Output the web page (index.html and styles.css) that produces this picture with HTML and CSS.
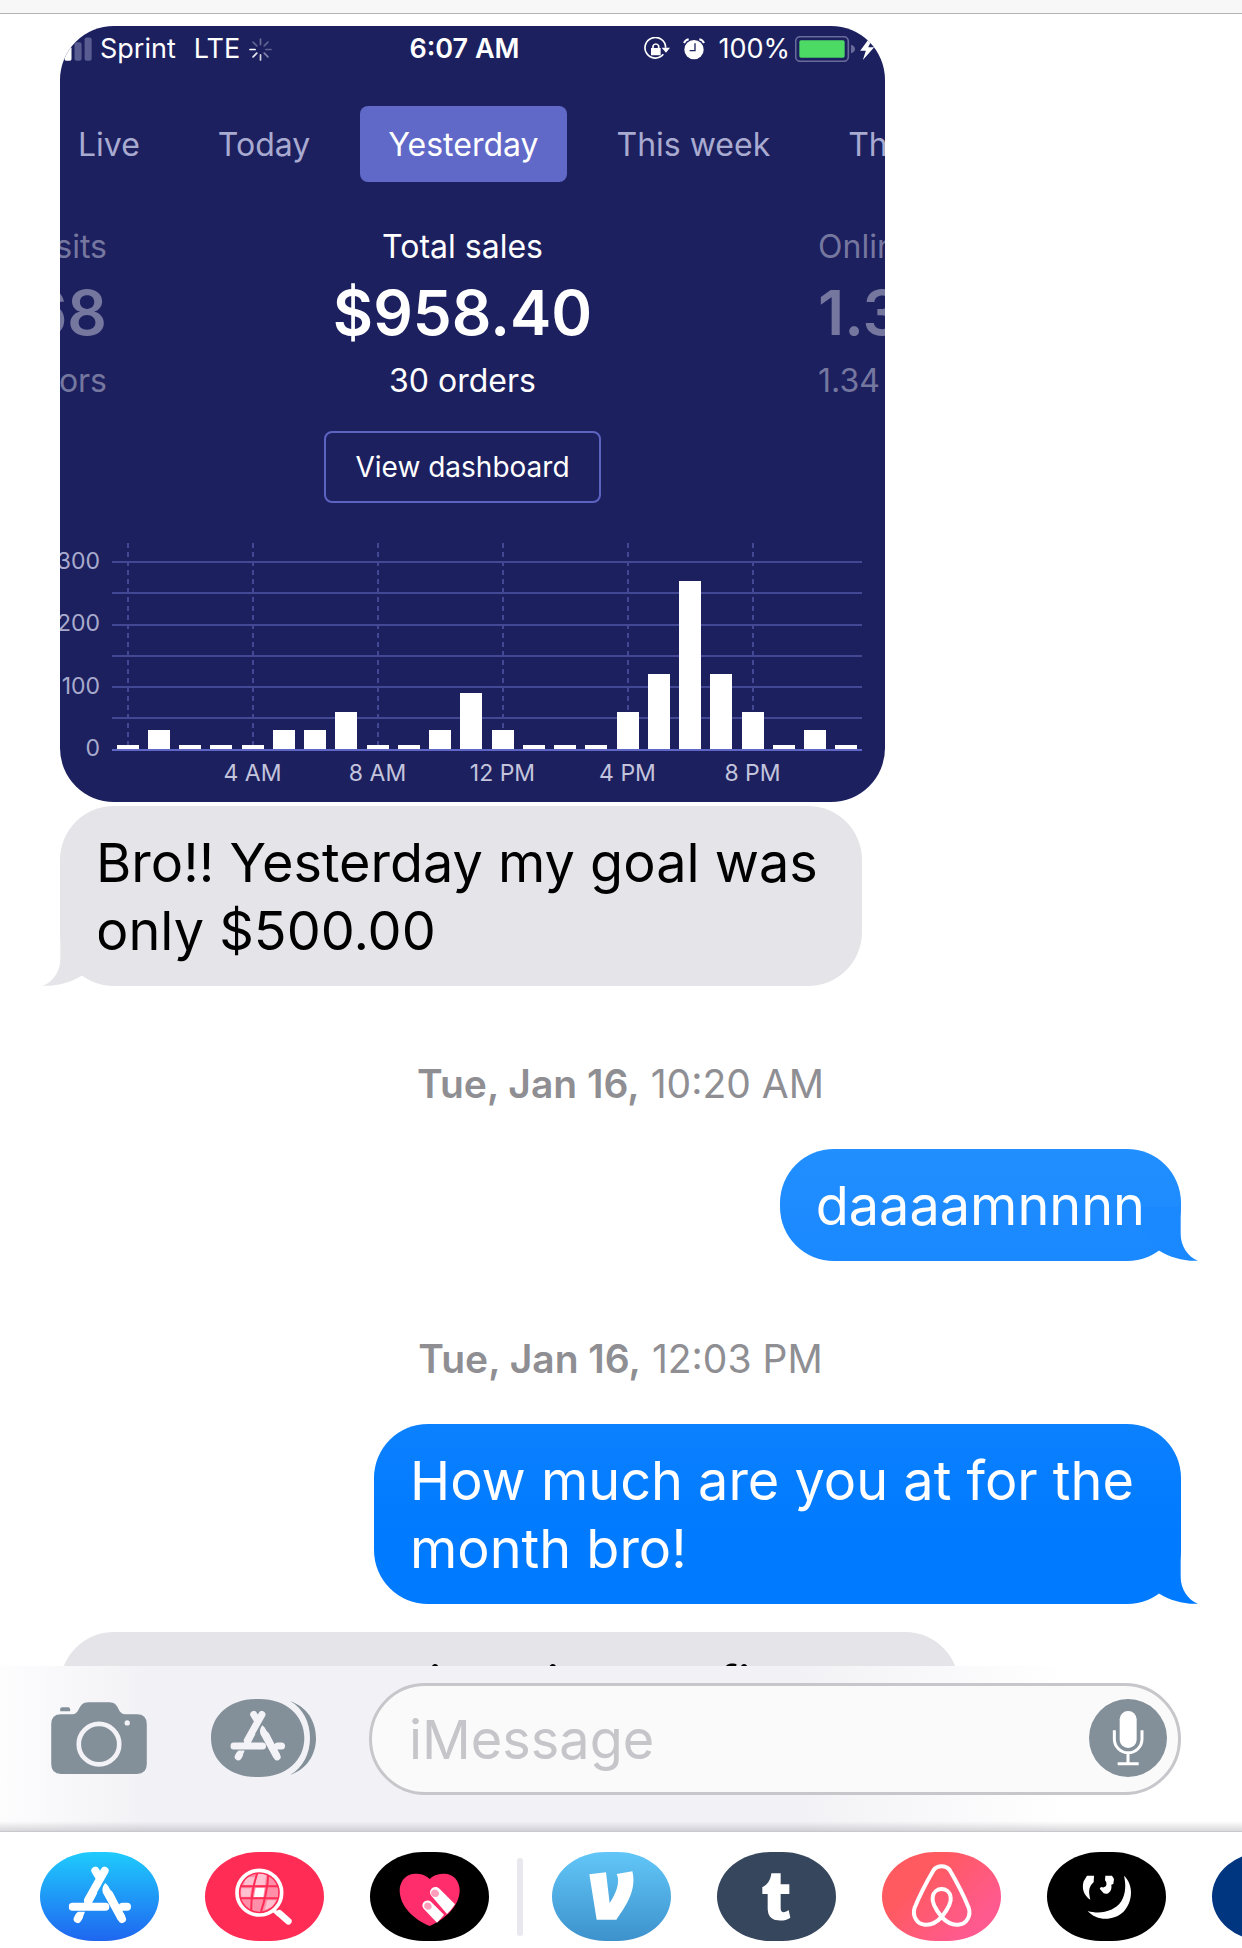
FILE: index.html
```html
<!DOCTYPE html>
<html lang="en">
<head>
<meta charset="utf-8">
<meta name="viewport" content="width=device-width, initial-scale=1">
<title>Messages</title>
<link rel="stylesheet" href="styles.css">
</head>
<body>
<svg class="defs" aria-hidden="true">
  <defs>
    <symbol id="tail" viewBox="132 425 168 162"><path fill="currentColor" d="M184 425V505C184 543 162 574 132 586C175 588 215 576 248 556L300 500V425Z"/></symbol>
    <symbol id="store-a" viewBox="204 800 188 172">
      <g fill="none" stroke="currentColor" stroke-width="24" stroke-linecap="round" stroke-linejoin="round">
        <path d="M284 813L298 836M312 813L262 902M216 921H314M366 921H379M235 950L231 958M326 884L364 958"/>
      </g>
      <path fill="currentColor" d="M314 850C303 861 304 876 309 884L352 962L374 950L322 858Z"/>
      <path fill="currentColor" d="M232 936H253L243 961L222 953ZM250 909L268 870L290 880L273 912Z"/>
    </symbol>
  </defs>
</svg>
<div class="screen">
  <header class="topbar"></header>
  <main class="thread">
    <article class="card">
      <div class="card-inner">
        <div class="status">
          <div class="status-left">
            <svg class="signal" viewBox="144 108 131 70"><g fill="#fff"><rect x="163" y="148" width="20" height="30" rx="5"/><rect x="193" y="136" width="21" height="42" rx="5"/></g><g fill="#595c90"><rect x="223" y="123" width="21" height="55" rx="6"/><rect x="253" y="109" width="21" height="69" rx="6"/></g></svg>
            <span>Sprint</span>
            <span class="network">LTE</span>
            <svg class="spinner" viewBox="743 110 68 68" fill="none" stroke="#fff" stroke-width="5" stroke-linecap="round"><path opacity=".35" d="M777 129V113"/><path opacity=".3" d="M788 133L799 122"/><path opacity=".3" d="M793 144H808"/><path opacity=".45" d="M788 155L799 166"/><path opacity=".8" d="M777 160V175"/><path opacity=".9" d="M766 155L755 166"/><path d="M761 144H746"/><path opacity=".3" d="M766 133L755 122"/></svg>
          </div>
          <span class="time">6:07 AM</span>
          <div class="status-right">
            <svg class="lock" viewBox="606 108 78 72"><path fill="none" stroke="#fff" stroke-width="5" d="M664 160A31 31 0 1 1 671 140"/><path fill="#fff" d="M659 140H684L672 155ZM627 141H656V163H627Z"/><path fill="none" stroke="#fff" stroke-width="5" d="M633 142V135A9 9 0 0 1 650 135V142"/></svg>
            <svg class="alarm" viewBox="728 111 66 66"><circle cx="761" cy="146" r="29" fill="#fff"/><path fill="none" stroke="#1c205f" stroke-width="4" d="M764 127V149H748"/><path fill="none" stroke="#fff" stroke-width="6" d="M731 126Q735 117 745 115M791 126Q787 117 777 115"/></svg>
            <span class="percent">100%</span>
            <svg class="battery" viewBox="1063 107 180 78"><rect x="1065" y="109" width="158" height="74" rx="14" fill="none" stroke="#696b9b" stroke-width="5"/><rect x="1076" y="120" width="136" height="52" rx="5" fill="#4cd964"/><path d="M1231 133Q1243 137 1243 146T1231 159Z" fill="#696b9b"/></svg>
            <svg class="bolt" viewBox="1262 112 62 66"><path fill="#fff" d="M1290 112L1262 150H1279L1270 178L1304 140H1286L1300 112Z"/></svg>
          </div>
        </div>
        <nav class="tabs">
          <button type="button" class="tab">Live</button>
          <button type="button" class="tab">Today</button>
          <button type="button" class="tab tab-active">Yesterday</button>
          <button type="button" class="tab">This week</button>
          <button type="button" class="tab">Th</button>
        </nav>
        <div class="metrics">
          <div class="metric metric-prev"><span class="label">Visits</span><strong class="value">68</strong><span class="detail">Visitors</span></div>
          <div class="metric"><span class="label">Total sales</span><strong class="value">$958.40</strong><span class="detail">30 orders</span></div>
          <div class="metric metric-next"><span class="label">Online</span><strong class="value">1.3</strong><span class="detail">1.34</span></div>
        </div>
        <button type="button" class="dashboard">View dashboard</button>
        <div class="chart">
          <div class="y-axis"><span>300</span><span>200</span><span>100</span><span>0</span></div>
          <svg class="plot" viewBox="0 0 750 208">
            <g stroke="#434894" stroke-width="2"><path d="M0 19H750M0 50H750M0 82H750M0 113H750M0 144H750M0 175H750"/></g>
            <g stroke="#434894" stroke-width="2" stroke-dasharray="5 4"><path d="M16 0V206"/><path d="M141 0V206"/><path d="M266 0V206"/><path d="M391 0V206"/><path d="M516 0V206"/><path d="M641 0V206"/></g>
            <path stroke="#5f66c6" stroke-width="2" d="M0 207H750"/>
            <path fill="#fff" d="M5 206v-4h22v4zM36 206v-19h22v19zM67 206v-4h22v4zM98 206v-4h22v4zM130 206v-4h22v4zM161 206v-19h22v19zM192 206v-19h22v19zM223 206v-37h22v37zM255 206v-4h22v4zM286 206v-4h22v4zM317 206v-19h22v19zM348 206v-56h22v56zM380 206v-19h22v19zM411 206v-4h22v4zM442 206v-4h22v4zM473 206v-4h22v4zM505 206v-37h22v37zM536 206v-75h22v75zM567 206v-168h22v168zM598 206v-75h22v75zM630 206v-37h22v37zM661 206v-4h22v4zM692 206v-19h22v19zM723 206v-4h22v4z"/>
          </svg>
          <div class="x-axis"><span>4 AM</span><span>8 AM</span><span>12 PM</span><span>4 PM</span><span>8 PM</span></div>
        </div>
      </div>
    </article>
    <p class="bubble received">Bro!! Yesterday my goal was only $500.00<svg class="tail"><use href="#tail"/></svg></p>
    <p class="stamp"><b>Tue, Jan 16,</b> 10:20 AM</p>
    <p class="bubble sent sent-light">daaaamnnnn<svg class="tail"><use href="#tail"/></svg></p>
    <p class="stamp"><b>Tue, Jan 16,</b> 12:03 PM</p>
    <p class="bubble sent">How much are you at for the month bro!<svg class="tail"><use href="#tail"/></svg></p>
    <p class="bubble received latest">Our weeks will gain one fine</p>
  </main>
  <form class="composer">
    <button type="button" class="icon-button" aria-label="Camera"><svg class="camera" viewBox="153 302 288 217"><path fill="#838f99" d="M180 330V323Q180 318 186 318H204Q210 318 210 323V330ZM183 339H218C240 339 233 303 265 303H328C360 303 351 339 376 339H411Q441 339 441 369V489Q441 519 411 519H183Q153 519 153 489V369Q153 339 183 339Z"/><circle cx="297" cy="429" r="61" fill="none" stroke="#f3f3f7" stroke-width="14"/><circle cx="382" cy="365" r="8" fill="#f3f3f7"/></svg></button>
    <button type="button" class="icon-button" aria-label="Apps"><svg class="apps" viewBox="633 294 315 234"><path fill="#838f99" d="M770 294H778C860 294 913 345 913 411S860 528 778 528H770C686 528 633 477 633 411S686 294 770 294ZM870 300C922 318 948 362 948 411S922 504 870 522C910 500 930 457 930 411S910 322 870 300Z"/><use href="#store-a" x="691" y="329" width="165" height="151" color="#f3f3f7"/></svg></button>
    <div class="field">
      <input type="text" class="input" placeholder="iMessage" aria-label="iMessage">
      <button type="button" class="icon-button" aria-label="Record audio"><svg class="mic" viewBox="868 294 234 234"><circle cx="985" cy="411" r="117" fill="#838f99"/><rect x="960" y="330" width="51" height="111" rx="25" fill="#fff"/><path fill="none" stroke="#fff" stroke-width="9" d="M944 388V414A41 41 0 0 0 1027 414V388M985 455V488M954 488H1017"/></svg></button>
    </div>
  </form>
  <nav class="drawer">
    <button type="button" class="app store" aria-label="App Store"><svg viewBox="118 757 357 267"><use href="#store-a" x="204" y="800" width="188" height="172" color="#fff"/></svg></button>
    <button type="button" class="app images" aria-label="Images"><svg viewBox="613 757 357 267"><circle cx="776" cy="879" r="58" fill="#ff8fa8"/><path fill="#ffc0cf" d="M735 833H765L762 856H730ZM722 866H752L748 891H722ZM800 902H826L815 922L792 930ZM768 821H797L793 856H763Z"/><path fill="#fff" d="M765 864H792L788 892H760Z"/><path fill="none" stroke="#ff2d55" stroke-width="6" d="M718 860H834M718 896H834M770 820Q750 880 752 934M803 822Q800 880 781 936"/><circle cx="776" cy="879" r="60" fill="none" stroke="#ff2d55" stroke-width="6"/><circle cx="776" cy="879" r="67" fill="none" stroke="#fff" stroke-width="11"/><path stroke="#fff" stroke-width="11" d="M817 930L834 946"/><path stroke="#fff" stroke-width="20" stroke-linecap="round" d="M836 941L863 965"/></svg></button>
    <button type="button" class="app touch" aria-label="Digital Touch"><svg viewBox="28 757 357 267"><path fill="#ff2d6b" d="M207 838C221 824 238 822 250 822C278 822 297 844 297 872C297 920 252 960 207 979C160 960 117 920 117 872C117 844 137 822 164 822C180 822 194 825 207 838Z"/><path stroke="#b5103f" stroke-width="10" d="M240 909L265 934M216 945L236 962"/><path fill="#fff" d="M212 888C200 873 219 853 235 866L283 914Q271 932 259 943ZM189 927C177 912 196 895 211 906L250 945Q240 957 229 969Z"/><path fill="#ff9dba" d="M214 888C205 875 220 863 231 873Q240 882 230 891Q220 894 214 888ZM192 924C186 914 198 903 208 911Q218 921 209 929Q199 933 192 924Z"/></svg></button>
    <span class="divider"></span>
    <button type="button" class="app venmo" aria-label="Venmo"><svg viewBox="577 757 357 267"><path fill="#fff" d="M689 824L739 818L750 910C768 882 783 849 771 823L818 815C832 870 800 918 770 960H711Z"/></svg></button>
    <button type="button" class="app tumblr" aria-label="Tumblr"><svg viewBox="1073 757 357 267"><path fill="#fff" d="M1236 821H1264V854H1290V883H1264V925C1264 941 1276 940 1288 931L1293 954C1282 961 1270 964 1256 962C1234 960 1225 947 1225 925V883H1209V862C1224 857 1234 841 1236 821Z"/></svg></button>
    <button type="button" class="app airbnb" aria-label="Airbnb"><svg viewBox="247 757 357 267" fill="none" stroke="#fff" stroke-width="12" stroke-linejoin="round"><path d="M426 952C399 918 397 903 399 892C404 860 448 860 453 892C455 903 453 918 426 952C408 971 393 977 376 975C351 973 337 948 345 924C362 882 382 845 402 811C413 796 439 796 450 811C470 845 490 882 507 924C515 948 501 973 476 975C459 977 444 971 426 952Z"/></svg></button>
    <button type="button" class="app moon" aria-label="Moon"><svg viewBox="742 757 357 267" fill="#fff"><path d="M973 828C1002 855 1001 905 971 937C939 966 889 963 864 934C901 945 944 936 965 905C979 880 979 855 973 828ZM862 828H883L882 848C865 862 867 879 872 900C854 890 845 867 852 845ZM917 828H937L943 838L941 853L935 855C938 874 926 886 912 881L900 867L904 862C922 868 924 850 916 842Z"/></svg></button>
    <button type="button" class="app navy" aria-label="More"></button>
  </nav>
</div>
</body>
</html>
```
FILE: styles.css
```css
* { box-sizing: border-box; }

body {
  margin: 0;
  background: #fff;
  font-family: Inter, "Liberation Sans", sans-serif;
  color: #000;
}

button {
  padding: 0;
  border: 0;
  background: none;
  font: inherit;
  color: inherit;
}

svg { display: block; }

.defs { position: absolute; width: 0; height: 0; }

.screen {
  display: flex;
  flex-direction: column;
  height: 100vh;
  overflow: hidden;
}

.topbar {
  flex: none;
  height: 14px;
  background: #f7f7f7;
  border-bottom: 1px solid #b2b2b2;
}

.thread {
  flex: 1;
  min-height: 0;
  display: flex;
  flex-direction: column;
  align-items: flex-start;
  padding: 12px 61px 0 60px;
  overflow: hidden;
}

/* Shared picture of the sales dashboard */
.card {
  flex: none;
  width: 100%;
  max-width: 825px;
  border-radius: 54px;
  overflow: hidden;
  background: #1c205f;
  color: #fff;
}

.card-inner {
  display: flex;
  flex-direction: column;
  margin-left: -20px;
  padding: 7px 0 16px;
}

.status {
  display: grid;
  grid-template-columns: 1fr auto 1fr;
  align-items: center;
  padding: 0 4px 0 8px;
  font-size: 27px;
  line-height: 32px;
}

.status-left, .status-right { display: flex; align-items: center; }
.status-right { justify-content: flex-end; }
.signal { width: 44px; height: 24px; margin-right: 8px; }
.network { margin-left: 18px; }
.spinner { width: 23px; height: 23px; margin-left: 9px; }
.time { font-weight: 600; }
.lock { width: 26px; height: 24px; }
.alarm { width: 22px; height: 22px; margin: 0 13px; }
.battery { width: 60px; height: 26px; margin: 0 5px; }
.bolt { width: 21px; height: 22px; }

.tabs {
  display: flex;
  gap: 22px;
  margin-top: 41px;
  padding-left: 10px;
}

.tab {
  flex: none;
  height: 76px;
  padding: 0 28px;
  border-radius: 8px;
  font-size: 32px;
  color: #a9aad0;
}

.tab-active { background: #6068c8; color: #fff; }

.metrics {
  display: grid;
  grid-template-columns: 67px 1fr 67px;
  margin-top: 45px;
}

.metric {
  display: flex;
  flex-direction: column;
  align-items: center;
  min-width: 0;
  white-space: nowrap;
}

.metric-prev { align-items: flex-end; color: #75779f; }
.metric-next { align-items: flex-start; color: #75779f; }
.label, .detail { font-size: 32px; line-height: 40px; }
.value { margin: 10px 0 12px; font-size: 62px; font-weight: 600; line-height: 72px; }

.dashboard {
  align-self: center;
  height: 72px;
  margin-top: 30px;
  padding: 0 29px;
  border: 2px solid #5c63c0;
  border-radius: 8px;
  font-size: 28px;
}

.chart {
  display: grid;
  grid-template-columns: 72px 1fr;
  row-gap: 9px;
  margin: 40px 23px 0 0;
  font-size: 23px;
  line-height: 26px;
  color: #a9abcd;
}

.y-axis {
  grid-row: span 2;
  display: flex;
  flex-direction: column;
  justify-content: space-between;
  align-items: flex-end;
  padding: 5px 12px 25px 0;
}

.plot { width: 100%; }

.x-axis {
  display: grid;
  grid-template-columns: repeat(5, 1fr);
  margin: 0 47px 0 78px;
  text-align: center;
  color: #c3c4dc;
}

/* Messages */
.bubble {
  position: relative;
  flex: none;
  margin: 0;
  padding: 23px 36px 21px;
  border-radius: 54px;
  font-size: 54px;
  line-height: 68px;
}

.received {
  max-width: 802px;
  margin-top: 4px;
  background: #e5e4e9;
}

.sent {
  align-self: flex-end;
  max-width: 807px;
  background: linear-gradient(#0c81ff, #007aff 60%);
  color: #fff;
}

.sent-light { background: linear-gradient(#228fff, #1a88ff); }

.tail {
  position: absolute;
  bottom: 0;
  left: -17px;
  width: 56px;
  height: 54px;
  color: #e5e4e9;
}

.sent .tail { left: auto; right: -17px; transform: scaleX(-1); color: #007aff; }
.sent-light .tail { color: #1a88ff; }

.latest { width: 100%; max-width: 899px; margin-top: 28px; padding-top: 20px; }

.stamp {
  align-self: center;
  margin: 76px 0 43px;
  font-size: 39px;
  line-height: 44px;
  color: #8e8e93;
}

.stamp b { font-weight: 600; }

/* Message entry */
.composer {
  flex: none;
  display: flex;
  align-items: center;
  padding: 17px 61px 36px 51px;
  background:
    linear-gradient(transparent 94%, rgba(120, 120, 130, 0.28)),
    linear-gradient(90deg, #fdfdfe, #f2f2f6 12%, #f2f2f6 64%, #fff 86%);
}

.icon-button { flex: none; padding-bottom: 3px; }
.camera { width: 96px; height: 72px; margin-right: 64px; }
.apps { width: 105px; height: 78px; margin-right: 53px; }
.mic { width: 78px; height: 78px; }

.field {
  flex: 1;
  display: flex;
  align-items: center;
  min-width: 0;
  height: 112px;
  padding: 0 11px 0 37px;
  border: 3px solid #c6c6cb;
  border-radius: 56px;
  background: #fafafa;
}

.input {
  flex: 1;
  min-width: 0;
  padding: 0;
  border: 0;
  background: none;
  font: inherit;
  font-size: 54px;
}

.input::placeholder { color: #c5c5ca; opacity: 1; }

.drawer {
  flex: none;
  display: flex;
  align-items: center;
  gap: 46px;
  padding: 20px 0 7px 40px;
  border-top: 1px solid #c9c9cd;
  overflow: hidden;
}

.app {
  flex: none;
  width: 119px;
  height: 89px;
  border-radius: 54px / 45px;
}

.app svg { width: 119px; height: 89px; }
.store { background: linear-gradient(#1fcbfd, #1f66f0); }
.images { background: #ff2d55; }
.touch, .moon { background: #000; }
.venmo { background: linear-gradient(#62c6f8, #3d92cc); }
.tumblr { background: #36465d; }
.airbnb { background: linear-gradient(135deg, #ff5a5f 30%, #ff5a8f 80%); }
.navy { background: #003580; }

.divider {
  flex: none;
  width: 6px;
  height: 78px;
  margin: 0 -17px 0 -18px;
  border-radius: 3px;
  background: #e9e8ee;
}
```
